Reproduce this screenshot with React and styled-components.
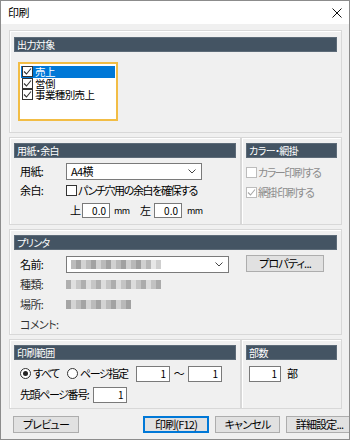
import React from "react";
import styled, { createGlobalStyle } from "styled-components";

const GlobalStyle = createGlobalStyle`
  html, body {
    margin: 0;
    padding: 0;
    background: #ffffff;
  }
  * {
    box-sizing: border-box;
  }
`;

const Window = styled.div`
  width: 350px;
  height: 440px;
  border: 1px solid #8c8c8c;
  background: #f0f0f0;
  display: flex;
  flex-direction: column;
  font-family: "Noto Sans CJK JP", "Noto Sans", sans-serif;
  font-size: 11px;
  line-height: 13px;
  font-feature-settings: "palt" 1;
  letter-spacing: -0.6px;
  color: #000;
  overflow: hidden;
`;

const TitleBar = styled.div`
  height: 23px;
  flex: none;
  background: #ffffff;
  display: flex;
  align-items: center;
  justify-content: space-between;
  padding: 0 6px 0 7px;
  font-size: 11px;
`;

const CloseIcon = styled.svg`
  width: 10px;
  height: 10px;
  margin-right: 1px;
`;

const Content = styled.div`
  display: flex;
  flex-direction: column;
  padding: 6px 7px 0 8px;
  gap: 4px;
`;

const Row = styled.div`
  display: flex;
  flex: none;
`;

const Panel = styled.div`
  border: 1px solid #d8d8d8;
  box-shadow: inset 1px 1px 0 #ffffff;
  padding: ${(p) => p.$pad || "5px 4px"};
  height: ${(p) => p.$h}px;
  width: ${(p) => (p.$w ? `${p.$w}px` : "auto")};
  flex: ${(p) => (p.$grow ? "1 1 auto" : "none")};
  display: flex;
  flex-direction: column;
`;

const Header = styled.div`
  height: 15px;
  flex: none;
  line-height: 13px;
  background: #445463;
  border: 1px solid #5d6b78;
  color: #ffffff;
  font-size: 10px;
  padding-left: 2px;
  white-space: nowrap;
`;

const ListBox = styled.div`
  margin: 10px 0 0 4px;
  width: 100px;
  height: 59px;
  border: 2px solid #f2bd45;
  background: #ffffff;
  padding: 2px 1px;
  display: flex;
  flex-direction: column;
`;

const ListItem = styled.div`
  display: flex;
  align-items: center;
  gap: 2px;
  height: 11.5px;
  flex: none;
  padding-left: 1px;
  background: ${(p) => (p.$selected ? "#0078d7" : "transparent")};
  color: ${(p) => (p.$selected ? "#ffffff" : "#000")};
  white-space: nowrap;
  font-size: 10.5px;
  line-height: 11px;
`;

const Box = styled.span`
  width: 11px;
  height: 11px;
  flex: none;
  border: 1px solid ${(p) => (p.$disabled ? "#bcbcbc" : "#333")};
  background: #ffffff;
  display: inline-flex;
  align-items: center;
  justify-content: center;
`;

const FieldRow = styled.div`
  display: flex;
  align-items: center;
  flex: none;
  height: ${(p) => p.$h || 17}px;
  margin-top: ${(p) => p.$mt || 0}px;
  padding-left: ${(p) => (p.$pl === undefined ? 6 : p.$pl)}px;
  white-space: nowrap;
`;

const Label = styled.span`
  width: ${(p) => p.$w || 46}px;
  flex: none;
  color: ${(p) => (p.$muted ? "#333" : "#000")};
`;

const Select = styled.div`
  width: ${(p) => p.$w}px;
  height: 17px;
  flex: none;
  border: 1px solid #7a7a7a;
  background: #ffffff;
  display: flex;
  align-items: center;
  justify-content: space-between;
  padding: 0 5px 0 4px;
`;

const Chevron = () => (
  <svg width="8" height="5" viewBox="0 0 8 5">
    <path d="M0.5 0.5 L4 4 L7.5 0.5" fill="none" stroke="#444" strokeWidth="1" />
  </svg>
);

const CheckLine = styled.label`
  display: flex;
  align-items: center;
  gap: 1px;
  letter-spacing: -1.4px;
  color: ${(p) => (p.$disabled ? "#8d8d8d" : "#000")};
`;

const NumInput = styled.div`
  width: ${(p) => p.$w}px;
  height: ${(p) => p.$h || 15}px;
  flex: none;
  border: 1px solid #7a7a7a;
  background: #ffffff;
  text-align: right;
  padding-right: 3px;
  line-height: ${(p) => (p.$h || 15) - 2}px;
  font-size: 10px;
  letter-spacing: 0;
  margin: 0 ${(p) => p.$mr || 0}px 0 ${(p) => p.$ml || 0}px;
`;

const Cell = styled.span`
  width: ${(p) => (p.$w ? `${p.$w}px` : "auto")};
  flex: none;
  display: inline-flex;
  align-items: center;
  padding-left: ${(p) => p.$pl || 0}px;
  font-size: ${(p) => p.$fs || 11}px;
  letter-spacing: ${(p) => (p.$tight ? "-1.4px" : "inherit")};
`;

const Mosaic = styled.div`
  display: flex;
  height: 9px;
  opacity: 0.9;
`;

const Tile = styled.span`
  width: 5px;
  height: 9px;
  display: inline-block;
`;

const Button = styled.button`
  height: 17px;
  width: ${(p) => p.$w}px;
  flex: none;
  margin-left: ${(p) => p.$ml || 0}px;
  border: 1px solid ${(p) => (p.$default ? "#0078d7" : "#adadad")};
  box-shadow: ${(p) => (p.$default ? "inset 0 0 0 1px #0078d7" : "none")};
  background: #e1e1e1;
  font-family: inherit;
  font-size: 11px;
  font-feature-settings: "palt" 1;
  letter-spacing: -0.8px;
  padding: 0;
  line-height: 15px;
  color: #000;
`;

const ButtonBar = styled.div`
  display: flex;
  align-items: center;
  flex: none;
  padding: 3px 0 0 4px;
`;

const RadioDot = styled.span`
  width: 11px;
  height: 11px;
  flex: none;
  border-radius: 50%;
  border: 1px solid #333;
  background: #fff;
  display: inline-flex;
  align-items: center;
  justify-content: center;
  margin-right: 2px;
  &::after {
    content: "";
    width: 5px;
    height: 5px;
    border-radius: 50%;
    background: ${(p) => (p.$on ? "#222" : "transparent")};
  }
`;

const Tick = ({ color = "#333" }) => (
  <svg width="9" height="9" viewBox="0 0 9 9">
    <path d="M1 4.5 L3.5 7 L8 1.5" fill="none" stroke={color} strokeWidth="1.1" />
  </svg>
);

const shades = (seed, n) =>
  Array.from({ length: n }, (_, i) => {
    const v = 150 + ((seed * 37 + i * 53) % 80);
    return `rgb(${v},${v},${v})`;
  });

function Blurred({ seed, n }) {
  return (
    <Mosaic>
      {shades(seed, n).map((c, i) => (
        <Tile key={i} style={{ background: c }} />
      ))}
    </Mosaic>
  );
}

const items = [
  { id: 1, text: "売上", selected: true },
  { id: 2, text: "営倒" },
  { id: 3, text: "事業種別売上" },
];

export default function App() {
  return (
    <>
      <GlobalStyle />
      <Window>
        <TitleBar>
          <span>印刷</span>
          <CloseIcon viewBox="0 0 10 10">
            <path d="M0.5 0.5 L9.5 9.5 M9.5 0.5 L0.5 9.5" stroke="#111" strokeWidth="1" />
          </CloseIcon>
        </TitleBar>
        <Content>
          <Panel $h={103} $pad="6px 4px">
            <Header>出力対象</Header>
            <ListBox>
              {items.map((it) => (
                <ListItem key={it.id} $selected={it.selected}>
                  <Box>
                    <Tick />
                  </Box>
                  {it.text}
                </ListItem>
              ))}
            </ListBox>
          </Panel>

          <Row>
            <Panel $w={232} $h={88}>
              <Header>用紙・余白</Header>
              <FieldRow $mt={5}>
                <Label>用紙:</Label>
                <Select $w={136}>
                  <span>A4横</span>
                  <Chevron />
                </Select>
              </FieldRow>
              <FieldRow $mt={2} $h={17}>
                <Label>余白:</Label>
                <CheckLine>
                  <Box />
                  パンチ穴用の余白を確保する
                </CheckLine>
              </FieldRow>
              <FieldRow $mt={4} $h={15} $pl={56}>
                <Cell $w={12}>上</Cell>
                <NumInput $w={28}>0.0</NumInput>
                <Cell $w={30} $fs={9} $pl={4}>mm</Cell>
                <Cell $w={14}>左</Cell>
                <NumInput $w={28}>0.0</NumInput>
                <Cell $w={26} $fs={9} $pl={5}>mm</Cell>
              </FieldRow>
            </Panel>
            <Panel $h={88} $grow>
              <Header>カラー・網掛</Header>
              <FieldRow $mt={7} $h={14} $pl={0}>
                <CheckLine $disabled>
                  <Box $disabled />
                  カラー印刷する
                </CheckLine>
              </FieldRow>
              <FieldRow $mt={6} $h={14} $pl={0}>
                <CheckLine $disabled>
                  <Box $disabled>
                    <Tick color="#a8a8a8" />
                  </Box>
                  網掛印刷する
                </CheckLine>
              </FieldRow>
            </Panel>
          </Row>

          <Panel $h={106}>
            <Header>プリンタ</Header>
            <FieldRow $mt={6}>
              <Label>名前:</Label>
              <Select $w={163}>
                <Blurred seed={3} n={18} />
                <Chevron />
              </Select>
              <Button $w={78} $ml={17} style={{ marginTop: -3 }}>
                プロパティ...
              </Button>
            </FieldRow>
            <FieldRow $mt={3}>
              <Label $muted>種類:</Label>
              <Blurred seed={7} n={19} />
            </FieldRow>
            <FieldRow $mt={3}>
              <Label $muted>場所:</Label>
              <Blurred seed={11} n={13} />
            </FieldRow>
            <FieldRow $mt={3}>
              <Label $muted>コメント:</Label>
            </FieldRow>
          </Panel>

          <Row>
            <Panel $w={232} $h={70}>
              <Header>印刷範囲</Header>
              <FieldRow $mt={5}>
                <Cell $w={47} $tight>
                  <RadioDot $on />
                  すべて
                </Cell>
                <Cell $w={69} $tight>
                  <RadioDot />
                  ページ指定
                </Cell>
                <NumInput $w={34} $h={16}>1</NumInput>
                <Cell $w={18} style={{ justifyContent: "center" }}>〜</Cell>
                <NumInput $w={34} $h={16}>1</NumInput>
              </FieldRow>
              <FieldRow $mt={4}>
                <Cell $tight>先頭ページ番号:</Cell>
                <NumInput $w={34} $h={16} $ml={5}>1</NumInput>
              </FieldRow>
            </Panel>
            <Panel $h={70} $grow>
              <Header>部数</Header>
              <FieldRow $mt={5} $pl={3}>
                <NumInput $w={32} $h={16} $mr={6}>1</NumInput>
                <span>部</span>
              </FieldRow>
            </Panel>
          </Row>

          <ButtonBar>
            <Button $w={66}>プレビュー</Button>
            <Button $w={66} $ml={64} $default>
              印刷(F12)
            </Button>
            <Button $w={65} $ml={6}>キャンセル</Button>
            <Button $w={67} $ml={6}>詳細設定...</Button>
          </ButtonBar>
        </Content>
      </Window>
    </>
  );
}
